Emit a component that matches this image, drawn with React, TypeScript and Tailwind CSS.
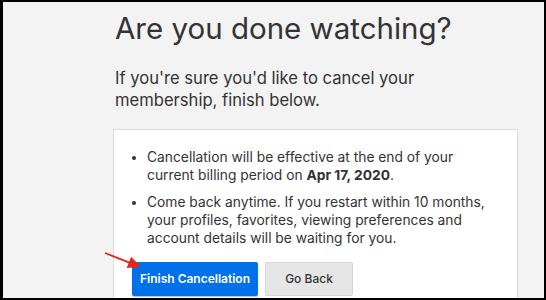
export default function App() {
  return (
    <div className="relative h-[300px] w-[546px] overflow-hidden border-t-2 border-l-[3px] border-r-2 border-b-2 border-black bg-[#f3f3f3] font-['Inter',sans-serif] text-[#333]">
      <div className="ml-[110px] w-[405px]">
        <h1 className="mt-[8px] pl-[2px] text-[29.5px] leading-[36px] font-normal">Are you done watching?</h1>
        <p className="mt-[21px] pl-[2px] text-[16.6px] leading-[22px]">
          If you're sure you'd like to cancel your
          <br />
          membership, finish below.
        </p>
        <div className="mt-[18px] h-[200px] border border-[#dcdcdc] bg-white pl-[18px] pt-[18px]">
          <ul className="flex flex-col gap-[9px] text-[13.8px] leading-[18px]">
            <li className="flex">
              <span className="flex w-[15px] shrink-0 pt-[8px]">
                <span className="h-[4px] w-[4px] rounded-full bg-[#333]" />
              </span>
              <span>
                Cancellation will be effective at the end of your
                <br />
                current billing period on <b className="font-bold">Apr 17, 2020</b>.
              </span>
            </li>
            <li className="flex">
              <span className="flex w-[15px] shrink-0 pt-[8px]">
                <span className="h-[4px] w-[4px] rounded-full bg-[#333]" />
              </span>
              <span>
                Come back anytime. If you restart within 10 months,
                <br />
                your profiles, favorites, viewing preferences and
                <br />
                account details will be waiting for you.
              </span>
            </li>
          </ul>
          <div className="mt-[15px] flex gap-[7px]">
            <button className="h-[34px] w-[126px] rounded-[2px] bg-[#0071eb] text-[12px] font-semibold text-white shadow-[0_1px_1px_rgba(0,0,0,0.25)]">
              Finish Cancellation
            </button>
            <button className="h-[34px] w-[88px] rounded-[2px] border border-[#d6d6d6] bg-[#e6e6e6] text-[12px] font-medium text-[#333]">
              Go Back
            </button>
          </div>
        </div>
      </div>
      <svg className="absolute left-0 top-0" width="546" height="300" viewBox="3 2 546 300">
        <line x1="105" y1="253" x2="130" y2="262.8" stroke="#e8231b" strokeWidth="1.8" />
        <polygon points="141,267 126.7,267.9 131.1,256.7" fill="#e8231b" />
      </svg>
    </div>
  );
}
